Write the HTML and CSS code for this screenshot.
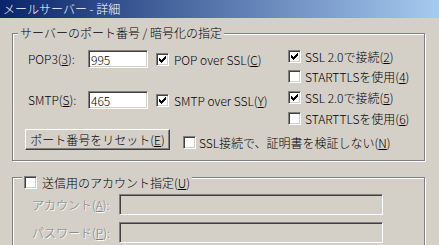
FILE: index.html
```html
<!DOCTYPE html>
<html lang="ja">
<head>
    <meta charset="UTF-8">
    <title>メールサーバー - 詳細</title>
    <link rel="stylesheet" href="styles.css">
</head>
<body>
    <svg width="0" height="0" class="defs">
        <symbol id="tick" viewBox="0 0 9 9">
            <rect x="1" y="3" width="1" height="3"/>
            <rect x="2" y="4" width="1" height="3"/>
            <rect x="3" y="5" width="1" height="3"/>
            <rect x="4" y="4" width="1" height="3"/>
            <rect x="5" y="3" width="1" height="3"/>
            <rect x="6" y="2" width="1" height="3"/>
            <rect x="7" y="1" width="1" height="3"/>
        </symbol>
    </svg>

    <div class="titlebar">メールサーバー - 詳細</div>

    <div class="dialog">
        <div class="group group-ports">
            <span class="legend">サーバーのポート番号 / 暗号化の指定</span>

            <label class="field-label row1">POP3(<u>3</u>):</label>
            <input class="edit row1" type="text" value="995">
            <div class="opt opt-mid row1"><span class="cb"><svg><use href="#tick"/></svg></span>POP over SSL(<u>C</u>)</div>
            <div class="opt right r1"><span class="cb"><svg><use href="#tick"/></svg></span>SSL 2.0で接続(<u>2</u>)</div>
            <div class="opt right r2"><span class="cb"></span>STARTTLSを使用(<u>4</u>)</div>

            <label class="field-label row3">SMTP(<u>S</u>):</label>
            <input class="edit row3" type="text" value="465">
            <div class="opt opt-mid row3"><span class="cb"><svg><use href="#tick"/></svg></span>SMTP over SSL(<u>Y</u>)</div>
            <div class="opt right r3"><span class="cb"><svg><use href="#tick"/></svg></span>SSL 2.0で接続(<u>5</u>)</div>
            <div class="opt right r4"><span class="cb"></span>STARTTLSを使用(<u>6</u>)</div>

            <div class="reset-row">
                <button class="btn">ポート番号をリセット(<u>E</u>)</button>
                <div class="opt opt-verify"><span class="cb"></span>SSL接続で、証明書を検証しない(<u>N</u>)</div>
            </div>
        </div>

        <div class="group group-account">
            <div class="legend opt"><span class="cb"></span>送信用のアカウント指定(<u>U</u>)</div>
            <div class="account-row">
                <span class="field-label disabled">アカウント(<u>A</u>):</span>
                <div class="edit edit-disabled"></div>
            </div>
            <div class="account-row">
                <span class="field-label disabled">パスワード(<u>P</u>):</span>
                <div class="edit edit-disabled"></div>
            </div>
        </div>
    </div>
</body>
</html>
```

FILE: styles.css
```css
body {
    margin: 0;
    width: 439px;
    height: 245px;
    overflow: hidden;
    background-color: #d4d0c8;
    font-family: "Noto Sans CJK JP", "Liberation Sans", sans-serif;
    font-size: 12px;
    font-weight: 300;
    line-height: 14px;
    color: #000;
}
.defs {
    position: absolute;
}
u {
    text-decoration: underline;
    text-underline-offset: 1px;
}
.titlebar {
    height: 18px;
    line-height: 18px;
    padding-left: 3px;
    color: #fff;
    background: linear-gradient(to right, #0a246a, #a6caf0);
}
.dialog {
    height: 227px;
    padding: 15px 0 0 12px;
    box-sizing: border-box;
    overflow: hidden;
}
.group {
    position: relative;
    box-sizing: border-box;
    width: 413px;
    border: 1px solid #808080;
    box-shadow: 1px 1px 0 #fff, inset 1px 1px 0 #fff;
}
.legend {
    position: absolute;
    background-color: #d4d0c8;
    padding: 0 2px;
    white-space: nowrap;
}

/* port settings */
.group-ports {
    height: 128px;
    padding: 16px 0 10px 15px;
    display: grid;
    grid-template-columns: 60px 68px 132px 1fr;
    grid-template-rows: 20px 21px 21px 17px 21px;
}
.group-ports .legend {
    top: -8px;
    left: 5px;
}
.field-label {
    display: flex;
    align-items: center;
    height: 18px;
    white-space: nowrap;
}
.row1 { grid-row: 1; }
.row3 { grid-row: 3; }
.field-label.row1, .field-label.row3 { grid-column: 1; }
.edit {
    box-sizing: border-box;
    border: 1px solid;
    border-color: #808080 #fff #fff #808080;
    box-shadow: inset 1px 1px 0 #404040, inset -1px -1px 0 #d4d0c8;
    background-color: #fff;
}
input.edit {
    grid-column: 2;
    width: 60px;
    height: 18px;
    margin: 0;
    padding: 0 0 0 2px;
    font: inherit;
    outline: none;
}
.opt {
    display: flex;
    align-items: center;
    height: 13px;
    white-space: nowrap;
}
.opt-mid {
    grid-column: 3;
    margin-top: 3px;
}
.right { grid-column: 4; }
.r1 { grid-row: 1; }
.r2 { grid-row: 2; }
.r3 { grid-row: 3; }
.r4 { grid-row: 4; }
.cb {
    flex: none;
    box-sizing: border-box;
    width: 13px;
    height: 13px;
    margin-right: 5px;
    padding: 1px;
    border: 1px solid;
    border-color: #808080 #fff #fff #808080;
    box-shadow: inset 1px 1px 0 #404040, inset -1px -1px 0 #d4d0c8;
    background-color: #fff;
}
.cb svg {
    display: block;
    width: 9px;
    height: 9px;
    fill: #000;
    shape-rendering: crispEdges;
}
.right .cb {
    margin-right: 4px;
}
.reset-row {
    grid-column: 1 / -1;
    grid-row: 5;
    display: flex;
    align-items: flex-start;
    margin-left: -3px;
}
.btn {
    box-sizing: border-box;
    width: 145px;
    height: 21px;
    padding: 0;
    border: 1px solid;
    border-color: #fff #404040 #404040 #fff;
    box-shadow: inset -1px -1px 0 #808080;
    background-color: #d4d0c8;
    font: inherit;
    color: #000;
}
.opt-verify {
    margin: 7px 0 0 13px;
}
.opt-verify .cb {
    margin-right: 3px;
}

/* account */
.group-account {
    height: 90px;
    margin-top: 16px;
    padding: 16px 0 0 19px;
    display: flex;
    flex-direction: column;
    gap: 7px;
}
.group-account .legend {
    top: -2px;
    left: 9px;
}
.account-row {
    display: flex;
    align-items: center;
}
.account-row .field-label {
    width: 87px;
    height: 21px;
}
.disabled {
    color: #808080;
    text-shadow: 1px 1px 0 #fff;
}
.edit-disabled {
    width: 264px;
    height: 21px;
    background-color: #d4d0c8;
}
```
